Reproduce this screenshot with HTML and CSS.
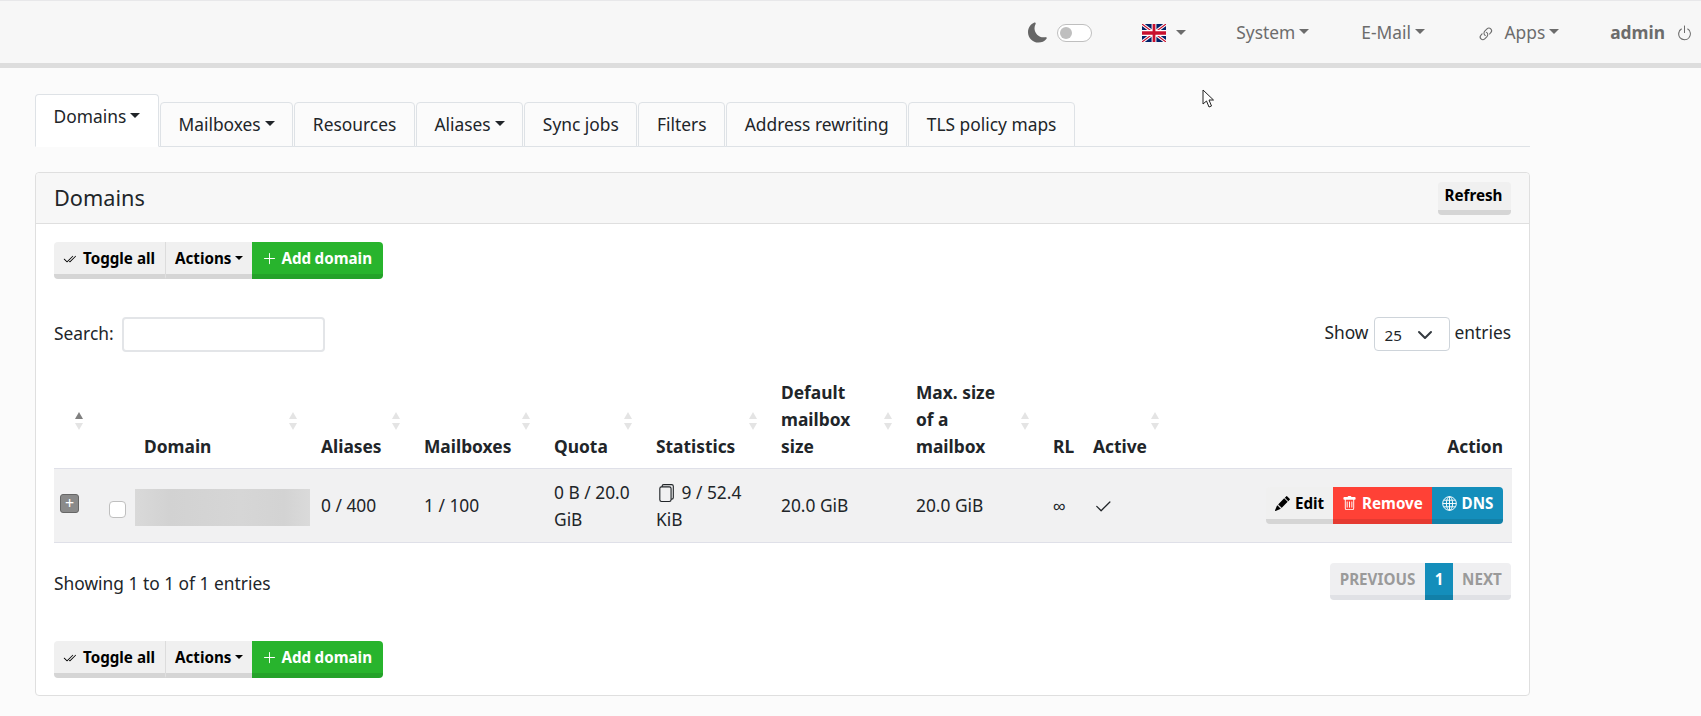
FILE: index.html
```html
<!DOCTYPE html>
<html lang="en">
<head>
  <meta charset="UTF-8">
  <title>Domains</title>
  <link rel="stylesheet" href="styles.css">
</head>
<body>
  <nav class="navbar">
    <div class="theme">
      <svg class="moon" viewBox="0 0 16 16"><path d="M6 .278a.768.768 0 0 1 .08.858 7.208 7.208 0 0 0-.878 3.46c0 4.021 3.278 7.277 7.318 7.277.527 0 1.04-.055 1.533-.16a.787.787 0 0 1 .81.316.733.733 0 0 1-.031.893A8.349 8.349 0 0 1 8.344 16C3.734 16 0 12.286 0 7.71 0 4.266 2.114 1.312 5.124.06A.752.752 0 0 1 6 .278z"/></svg>
      <span class="switch"><span class="knob"></span></span>
    </div>
    <div class="lang">
      <svg class="flag" viewBox="0 0 60 36" preserveAspectRatio="none">
        <rect width="60" height="36" fill="#012169"/>
        <path d="M0 0L60 36M60 0L0 36" stroke="#fff" stroke-width="7"/>
        <path d="M0 0L60 36M60 0L0 36" stroke="#c8102e" stroke-width="2.5"/>
        <path d="M30 0V36M0 18H60" stroke="#fff" stroke-width="12"/>
        <path d="M30 0V36M0 18H60" stroke="#c8102e" stroke-width="7"/>
      </svg>
      <span class="caret"></span>
    </div>
    <a class="nav-link">System<span class="caret"></span></a>
    <a class="nav-link">E-Mail<span class="caret"></span></a>
    <a class="nav-link apps">
      <svg class="link-icon" viewBox="0 0 16 16"><g transform="rotate(-45 8 8)"><path d="M6.354 5.5H4a3 3 0 0 0 0 6h3a3 3 0 0 0 2.83-4H9c-.086 0-.17.01-.25.031A2 2 0 0 1 7 10.5H4a2 2 0 1 1 0-4h1.535c.218-.376.495-.714.82-1z"/><path d="M9 5.5a3 3 0 0 0-2.83 4h1.098A2 2 0 0 1 9 6.5h3a2 2 0 1 1 0 4h-1.535a4.02 4.02 0 0 1-.82 1H12a3 3 0 1 0 0-6H9z"/></g></svg>
      Apps<span class="caret"></span>
    </a>
    <div class="user">
      <b>admin</b>
      <svg class="power" viewBox="0 0 16 16"><path d="M7.5 1v7h1V1h-1z"/><path d="M3 8.812a4.999 4.999 0 0 1 2.578-4.375l-.485-.874A6 6 0 1 0 11 3.616l-.501.865A5 5 0 1 1 3 8.812z"/></svg>
    </div>
  </nav>

  <svg class="cursor" viewBox="0 0 12 20"><path d="M1 1V15L4.5 12L7 18L9.5 17L7 11H11.5Z" fill="#fff" stroke="#222" stroke-width="1"/></svg>

  <main class="content">
    <ul class="tabs">
      <li class="active">Domains<span class="caret"></span></li>
      <li>Mailboxes<span class="caret"></span></li>
      <li>Resources</li>
      <li>Aliases<span class="caret"></span></li>
      <li>Sync jobs</li>
      <li>Filters</li>
      <li>Address rewriting</li>
      <li>TLS policy maps</li>
    </ul>

    <section class="card">
      <header class="card-head">
        <h3>Domains</h3>
        <button class="btn refresh">Refresh</button>
      </header>
      <div class="card-body">
        <div class="btn-group">
          <button class="btn toggle">
            <svg class="ico small" viewBox="0 0 16 16"><path d="M12.354 4.354a.5.5 0 0 0-.708-.708L5 10.293 1.854 7.146a.5.5 0 1 0-.708.708l3.5 3.5a.5.5 0 0 0 .708 0l7-7zm-4.208 7-.896-.897.707-.707.543.543 6.646-6.647a.5.5 0 0 1 .708.708l-7 7a.5.5 0 0 1-.708 0z"/></svg>
            Toggle all
          </button>
          <button class="btn actions">Actions<span class="caret small"></span></button>
          <button class="btn green add">
            <svg class="ico" viewBox="0 0 16 16"><path d="M8 2a.5.5 0 0 1 .5.5v5h5a.5.5 0 0 1 0 1h-5v5a.5.5 0 0 1-1 0v-5h-5a.5.5 0 0 1 0-1h5v-5A.5.5 0 0 1 8 2Z"/></svg>
            Add domain
          </button>
        </div>

        <div class="table-top">
          <label class="search">Search: <span class="input"></span></label>
          <div class="length">Show <span class="select">25<svg viewBox="0 0 16 16"><path d="M2 5l6 6 6-6" fill="none" stroke="#343a40" stroke-width="2" stroke-linecap="round" stroke-linejoin="round"/></svg></span> entries</div>
        </div>

        <table class="domains">
          <colgroup>
            <col class="c-expand"><col class="c-check"><col class="c-domain"><col class="c-aliases"><col class="c-mail"><col class="c-quota"><col class="c-stats"><col class="c-default"><col class="c-max"><col class="c-rl"><col class="c-active"><col>
          </colgroup>
          <thead>
            <tr>
              <th class="sort first"><i class="up"></i><i></i></th>
              <th></th>
              <th class="sort">Domain<i class="up"></i><i></i></th>
              <th class="sort">Aliases<i class="up"></i><i></i></th>
              <th class="sort">Mailboxes<i class="up"></i><i></i></th>
              <th class="sort">Quota<i class="up"></i><i></i></th>
              <th class="sort">Statistics<i class="up"></i><i></i></th>
              <th class="sort">Default mailbox size<i class="up"></i><i></i></th>
              <th class="sort">Max. size of a mailbox<i class="up"></i><i></i></th>
              <th>RL</th>
              <th class="sort">Active<i class="up"></i><i></i></th>
              <th class="right">Action</th>
            </tr>
          </thead>
          <tbody>
            <tr>
              <td class="expand-cell"><span class="expand">+</span></td>
              <td class="check-cell"><span class="checkbox"></span></td>
              <td class="blur-cell"><div class="blurred"></div></td>
              <td>0 / 400</td>
              <td>1 / 100</td>
              <td>0 B / 20.0 GiB</td>
              <td><svg class="files" viewBox="0 0 16 16"><path d="M13 0H6a2 2 0 0 0-2 2 2 2 0 0 0-2 2v10a2 2 0 0 0 2 2h7a2 2 0 0 0 2-2 2 2 0 0 0 2-2V2a2 2 0 0 0-2-2zm0 13V4a2 2 0 0 0-2-2H5a1 1 0 0 1 1-1h7a1 1 0 0 1 1 1v10a1 1 0 0 1-1 1zM3 4a1 1 0 0 1 1-1h7a1 1 0 0 1 1 1v10a1 1 0 0 1-1 1H4a1 1 0 0 1-1-1V4z"/></svg> 9 / 52.4 KiB</td>
              <td>20.0 GiB</td>
              <td>20.0 GiB</td>
              <td>∞</td>
              <td><svg class="check" viewBox="0 0 16 16"><path d="M13.854 3.646a.5.5 0 0 1 0 .708l-7 7a.5.5 0 0 1-.708 0l-3.5-3.5a.5.5 0 1 1 .708-.708L6.5 10.293l6.646-6.647a.5.5 0 0 1 .708 0z"/></svg></td>
              <td class="right">
                <div class="btn-group row-actions">
                  <button class="btn edit">
                    <svg class="ico" viewBox="0 0 16 16"><path d="M12.854.146a.5.5 0 0 0-.707 0L10.5 1.793 14.207 5.5l1.647-1.646a.5.5 0 0 0 0-.708l-3-3zm.646 6.061L9.793 2.5 3.293 9H3.5a.5.5 0 0 1 .5.5v.5h.5a.5.5 0 0 1 .5.5v.5h.5a.5.5 0 0 1 .5.5v.5h.5a.5.5 0 0 1 .5.5v.207l6.5-6.5zm-7.468 7.468A.5.5 0 0 1 6 13.5V13h-.5a.5.5 0 0 1-.5-.5V12h-.5a.5.5 0 0 1-.5-.5V11h-.5a.5.5 0 0 1-.5-.5V10h-.5a.499.499 0 0 1-.175-.032l-.179.178a.5.5 0 0 0-.11.168l-2 5a.5.5 0 0 0 .65.65l5-2a.5.5 0 0 0 .168-.11l.178-.178z"/></svg>
                    Edit
                  </button>
                  <button class="btn red">
                    <svg class="ico" viewBox="0 0 16 16"><path d="M5.5 5.5A.5.5 0 0 1 6 6v6a.5.5 0 0 1-1 0V6a.5.5 0 0 1 .5-.5zm2.5 0a.5.5 0 0 1 .5.5v6a.5.5 0 0 1-1 0V6a.5.5 0 0 1 .5-.5zm3 .5a.5.5 0 0 0-1 0v6a.5.5 0 0 0 1 0V6z"/><path d="M14.5 3a1 1 0 0 1-1 1H13v9a2 2 0 0 1-2 2H5a2 2 0 0 1-2-2V4h-.5a1 1 0 0 1-1-1V2a1 1 0 0 1 1-1H6a1 1 0 0 1 1-1h2a1 1 0 0 1 1 1h3.5a1 1 0 0 1 1 1v1zM4.118 4 4 4.059V13a1 1 0 0 0 1 1h6a1 1 0 0 0 1-1V4.059L11.882 4H4.118zM2.5 3V2h11v1h-11z"/></svg>
                    Remove
                  </button>
                  <button class="btn blue">
                    <svg class="ico globe" viewBox="0 0 16 16"><circle cx="8" cy="8" r="7.3"/><ellipse cx="8" cy="8" rx="3.3" ry="7.3"/><path d="M8 .7V15.3M.7 8H15.3M1.8 4.5H14.2M1.8 11.5H14.2"/></svg>
                    DNS
                  </button>
                </div>
              </td>
            </tr>
          </tbody>
        </table>

        <div class="table-bottom">
          <div class="info">Showing 1 to 1 of 1 entries</div>
          <div class="btn-group pager">
            <button class="btn page prev off">PREVIOUS</button>
            <button class="btn blue page num">1</button>
            <button class="btn page next off">NEXT</button>
          </div>
        </div>

        <div class="btn-group">
          <button class="btn toggle">
            <svg class="ico small" viewBox="0 0 16 16"><path d="M12.354 4.354a.5.5 0 0 0-.708-.708L5 10.293 1.854 7.146a.5.5 0 1 0-.708.708l3.5 3.5a.5.5 0 0 0 .708 0l7-7zm-4.208 7-.896-.897.707-.707.543.543 6.646-6.647a.5.5 0 0 1 .708.708l-7 7a.5.5 0 0 1-.708 0z"/></svg>
            Toggle all
          </button>
          <button class="btn actions">Actions<span class="caret small"></span></button>
          <button class="btn green add">
            <svg class="ico" viewBox="0 0 16 16"><path d="M8 2a.5.5 0 0 1 .5.5v5h5a.5.5 0 0 1 0 1h-5v5a.5.5 0 0 1-1 0v-5h-5a.5.5 0 0 1 0-1h5v-5A.5.5 0 0 1 8 2Z"/></svg>
            Add domain
          </button>
        </div>
      </div>
    </section>
  </main>
</body>
</html>
```

FILE: styles.css
```css
* {
  box-sizing: border-box;
}
body {
  margin: 0;
  background: #fbfbfb;
  color: #212529;
  font-family: "Noto Sans", sans-serif;
  font-size: 17.36px;
  line-height: 27px;
  overflow: hidden;
}
.caret {
  display: inline-block;
  margin-left: 4px;
  vertical-align: 5px;
  border-top: 5px solid currentColor;
  border-left: 5px solid transparent;
  border-right: 5px solid transparent;
}
.caret.small {
  border-top-width: 4px;
  border-left-width: 4px;
  border-right-width: 4px;
  vertical-align: 4px;
}

/* top bar */
.navbar {
  height: 68px;
  display: flex;
  align-items: center;
  justify-content: flex-end;
  padding: 3px 8px 2px 0;
  background: #f7f7f7;
  border-top: 1px solid #e8e8ea;
  border-bottom: 5px solid #dddddd;
  color: #6c6c6c;
}
.theme {
  display: flex;
  align-items: center;
  gap: 9px;
  margin-right: 50px;
}
.moon {
  width: 20px;
  height: 21px;
  fill: #666;
}
.switch {
  width: 35px;
  height: 18px;
  padding: 2px;
  background: #fff;
  border: 1px solid #bfbfbf;
  border-radius: 9px;
}
.knob {
  display: block;
  width: 12px;
  height: 12px;
  background: #bfbfbf;
  border-radius: 50%;
}
.lang {
  display: flex;
  align-items: center;
  margin-right: 50px;
}
.flag {
  width: 24px;
  height: 18px;
}
.lang .caret {
  margin-left: 10px;
  vertical-align: 0;
}
.nav-link {
  margin-right: 52px;
}
.nav-link .caret {
  margin-left: 4px;
}
.apps {
  margin-right: 51px;
}
.link-icon {
  width: 17px;
  height: 17px;
  margin-right: 6px;
  fill: #6c6c6c;
  vertical-align: -3px;
}
.user {
  display: flex;
  align-items: center;
  gap: 11px;
}
.power {
  width: 17px;
  height: 18px;
  fill: #6c6c6c;
}
.cursor {
  position: absolute;
  left: 1202px;
  top: 89px;
  width: 12px;
  height: 20px;
}

/* tabs */
.content {
  width: 1495px;
  margin-left: 35px;
}
.tabs {
  display: flex;
  align-items: flex-end;
  height: 79px;
  margin: 0;
  padding: 0;
  list-style: none;
  border-bottom: 1px solid #dee2e6;
}
.tabs li {
  height: 45px;
  margin-right: 1px;
  margin-bottom: -1px;
  padding: 8px 17.6px 0;
  background: #fbfbfb;
  border: 1px solid #dee2e6;
  border-radius: 4px 4px 0 0;
}
.tabs li.active {
  height: 53px;
  background: #fff;
  border-bottom-color: #fff;
}

/* card */
.card {
  height: 524px;
  margin-top: 25px;
  background: #fff;
  border: 1px solid #dfdfdf;
  border-radius: 4px;
}
.card-head {
  display: flex;
  align-items: center;
  justify-content: space-between;
  height: 51px;
  padding: 0 18px;
  background: #f7f7f7;
  border-bottom: 1px solid #dfdfdf;
  border-radius: 4px 4px 0 0;
}
.card-head h3 {
  margin: -2px 0 0;
  font-size: 21.7px;
  font-weight: 400;
}
.card-body {
  padding: 18px 18px 0;
}

/* buttons */
.btn {
  display: inline-block;
  height: 37px;
  padding: 0 9px;
  background: #f0f0f0;
  border: 0;
  border-bottom: 5px solid #d5d5d5;
  color: #000;
  font-family: inherit;
  font-size: 15.19px;
  font-weight: 700;
  line-height: 28px;
  white-space: nowrap;
}
.btn-group {
  display: flex;
}
.btn-group .btn:first-child {
  border-radius: 4px 0 0 4px;
}
.btn-group .btn:last-child {
  border-radius: 0 4px 4px 0;
}
.refresh {
  width: 73px;
  height: 33px;
  padding: 0 2px 0 0;
  line-height: 23px;
  border-radius: 4px;
}
.toggle {
  width: 112px;
  padding: 0 0 0 9px;
  border-right: 1px solid #dcdcdc;
  text-align: left;
}
.actions {
  width: 86px;
  padding: 0 0 0 9px;
  text-align: left;
}
.add {
  width: 131px;
  padding: 0 0 0 10px;
  text-align: left;
  word-spacing: -0.5px;
}
.green {
  background: #28b42d;
  border-bottom-color: #24a229;
  color: #fff;
}
.red {
  background: #ff4136;
  border-bottom-color: #e53a31;
  color: #fff;
}
.blue {
  background: #148ebb;
  border-bottom-color: #1280a8;
  color: #fff;
}
.ico {
  width: 15px;
  height: 15px;
  margin-right: 1px;
  fill: currentColor;
  vertical-align: -2px;
}
.ico.small {
  width: 13px;
  height: 13px;
  margin-right: 3px;
}
.ico.globe {
  fill: none;
  stroke: #fff;
  stroke-width: 1;
}

/* table controls */
.table-top {
  display: flex;
  justify-content: space-between;
  align-items: center;
  height: 34px;
  margin: 38px 0 20px;
}
.search {
  display: flex;
  align-items: flex-start;
  gap: 8px;
  line-height: 32px;
}
.input {
  width: 203px;
  height: 35px;
  background: #fff;
  border: 2px solid #e3e5e8;
  border-radius: 4px;
}
.length {
  display: flex;
  align-items: flex-start;
  gap: 5px;
  line-height: 30px;
}
.select {
  display: flex;
  align-items: center;
  justify-content: space-between;
  width: 76px;
  height: 34px;
  margin: 0 -1px 0 1px;
  padding: 2px 16px 0 9px;
  background: #fff;
  border: 1px solid #ced4da;
  border-radius: 4px;
  font-size: 15.19px;
}
.select svg {
  width: 16px;
  height: 16px;
}

/* table */
.domains {
  width: 1458px;
  border-collapse: collapse;
  table-layout: fixed;
}
.c-expand { width: 47px; }
.c-check { width: 35px; }
.c-domain { width: 177px; }
.c-aliases { width: 103px; }
.c-mail { width: 130px; }
.c-quota { width: 102px; }
.c-stats { width: 125px; }
.c-default { width: 135px; }
.c-max { width: 137px; }
.c-rl { width: 40px; }
.c-active { width: 90px; }
.domains th {
  position: relative;
  padding: 8px 30px 8px 8px;
  border-bottom: 1px solid #dfe0e8;
  text-align: left;
  vertical-align: bottom;
  font-weight: 700;
}
.domains th.right {
  padding-right: 9px;
}
.domains td {
  padding: 8px;
  height: 74px;
  background: #f1f1f2;
  border-bottom: 1px solid #dfe0e8;
}
.domains .right {
  text-align: right;
}
.sort i {
  position: absolute;
  right: 16px;
  top: 52px;
  border-left: 4px solid transparent;
  border-right: 4px solid transparent;
  border-top: 7px solid #e4e4e4;
}
.sort i.up {
  top: 41px;
  border-top: 0;
  border-bottom: 7px solid #e4e4e4;
}
.sort.first i {
  right: 18px;
}
.sort.first i.up {
  border-bottom-color: #808080;
}
.domains td.expand-cell {
  padding: 0 0 4px 6px;
}
.expand {
  display: block;
  width: 19px;
  height: 19px;
  background: #8a8a8a;
  border: 1px solid #666;
  border-radius: 3px;
  color: #fff;
  font-size: 16px;
  line-height: 16px;
  text-align: center;
}
.domains td.check-cell {
  padding: 8px 0 0 8px;
}
.checkbox {
  display: block;
  width: 17px;
  height: 17px;
  background: #fff;
  border: 1px solid #bfbfbf;
  border-radius: 4px;
}
.domains td.blur-cell {
  padding: 0;
}
.blurred {
  width: 175px;
  height: 37px;
  margin: 4px 0 0 -1px;
  background: linear-gradient(90deg, #d9d9d9, #d2d2d2 20%, #d6d6d6 60%, #d3d3d3 85%, #dadada);
}
.files {
  width: 18px;
  height: 20px;
  margin: 0 2px 0 1px;
  fill: #212529;
  vertical-align: -4px;
}
.check {
  width: 20px;
  height: 20px;
  fill: #212529;
  vertical-align: -5px;
}
.row-actions {
  justify-content: flex-end;
  margin-right: 1px;
}
.row-actions .edit {
  width: 67px;
}
.row-actions .red {
  width: 99px;
}
.row-actions .blue {
  width: 71px;
}

/* footer of the table */
.table-bottom {
  display: flex;
  justify-content: space-between;
  align-items: center;
  height: 37px;
  margin: 20px 0 41px;
}
.info {
  padding-top: 4px;
}
.page {
  padding: 0;
  text-align: center;
}
.prev {
  width: 95px;
}
.num {
  width: 28px;
}
.next {
  width: 58px;
}
.page.off {
  background: #efeff1;
  border-bottom-color: #e0e1e5;
  color: #9a9a9a;
}
```
